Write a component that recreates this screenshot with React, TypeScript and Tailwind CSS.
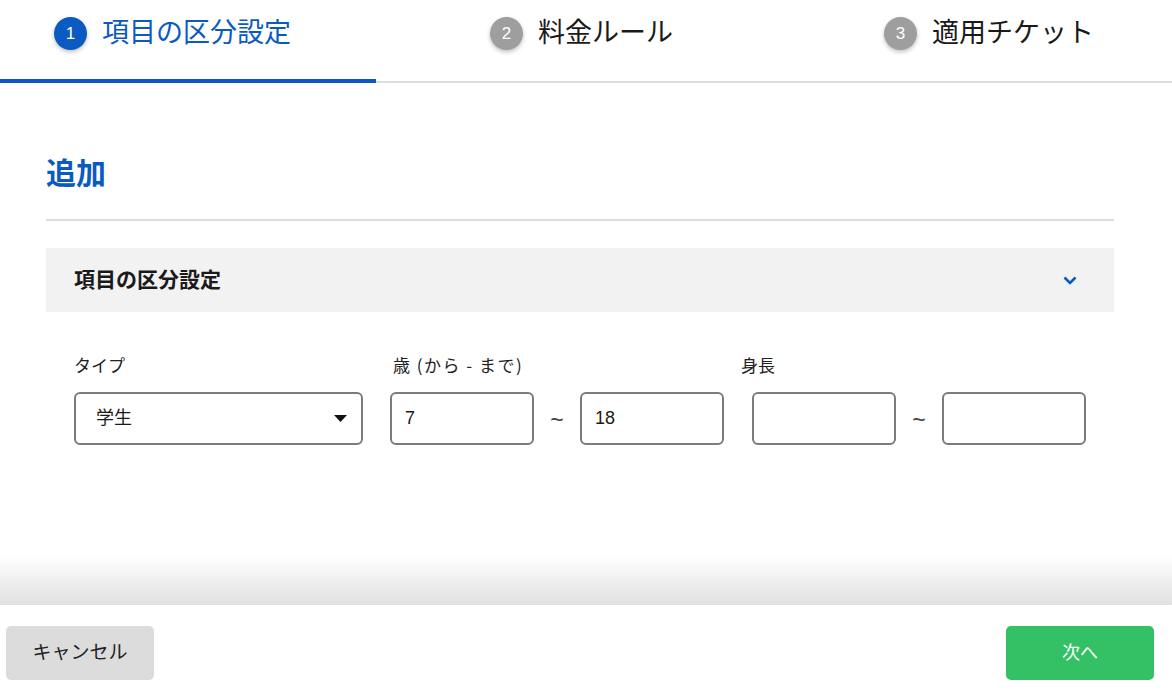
import { useState } from 'react'

const font = 'font-["Liberation_Sans","Noto_Sans_CJK_JP",sans-serif]'
const cjk = 'font-["Noto_Sans_CJK_JP",sans-serif]'

function StepTab({ num, label, active }: { num: number; label: string; active?: boolean }) {
    return (
        <div className="flex h-[67px] items-center gap-[15px]">
            <div
                className={`flex h-[33px] w-[33px] items-center justify-center rounded-full text-[17px] text-white shadow-[0_2px_4px_rgba(0,0,0,0.25)] ${
                    active ? 'bg-[#0a5ac2]' : 'bg-[#9e9e9e]'
                }`}
            >
                {num}
            </div>
            <span className={`text-[27px] leading-none ${active ? 'text-[#0a5ac2]' : 'text-[#1a1a1a]'}`}>
                {label}
            </span>
        </div>
    )
}

function Field({ value }: { value: string }) {
    return (
        <div className="flex h-[53px] w-[144px] items-center rounded-[6px] border-2 border-[#7b7b7b] pl-[13px] text-[18px] text-[#1a1a1a]">
            {value}
        </div>
    )
}

function Tilde() {
    return (
        <div className="flex w-[46px] items-center justify-center pt-[3px] text-[23px] leading-none text-[#444]">
            ~
        </div>
    )
}

export default function App() {
    const [isOpen, setIsOpen] = useState(true)

    return (
        <div className={`flex h-[696px] w-[1172px] flex-col overflow-hidden bg-white ${font}`}>
            {/* steps */}
            <div className="flex h-[83px] border-b-2 border-[#dddddd]">
                <div className="-mb-[2px] h-[83px] w-[376px] border-b-4 border-[#0a5ac2] pl-[54px]">
                    <StepTab num={1} label="項目の区分設定" active />
                </div>
                <div className="w-[394px] pl-[114px]">
                    <StepTab num={2} label="料金ルール" />
                </div>
                <div className="pl-[114px]">
                    <StepTab num={3} label="適用チケット" />
                </div>
            </div>

            <div className="flex-1 pt-[70px] pr-[58px] pl-[46px]">
                <h1 className="text-[30px] leading-[42px] font-bold text-[#0a5ac2]">追加</h1>
                <div className="mt-[24px] h-[2px] bg-[#dcdcdc]" />

                <button
                    onClick={() => setIsOpen(!isOpen)}
                    className="mt-[27px] flex h-[64px] w-full items-center justify-between bg-[#f2f2f2] pr-[37px] pl-[28px]"
                >
                    <span className="text-[21px] font-bold text-[#1a1a1a]">項目の区分設定</span>
                    <svg width="14" height="9" viewBox="0 0 14 9" fill="none">
                        <path
                            d={isOpen ? 'M1.5 1.5L7 7L12.5 1.5' : 'M1.5 7.5L7 2L12.5 7.5'}
                            stroke="#0a5ac2"
                            strokeWidth="2.6"
                        />
                    </svg>
                </button>

                {isOpen && (
                    <div className="flex pt-[41px] pl-[28px]">
                        <div className="w-[289px]">
                            <div className={`text-[17px] leading-[24px] text-[#222] ${cjk}`}>タイプ</div>
                            <div className="mt-[15px] flex h-[53px] items-center justify-between rounded-[6px] border-2 border-[#7b7b7b] pr-[14px] pl-[20px] text-[18px] text-[#1a1a1a]">
                                <span>学生</span>
                                <svg width="13" height="7" viewBox="0 0 13 7">
                                    <path d="M0 0H13L6.5 7Z" fill="#111" />
                                </svg>
                            </div>
                        </div>

                        <div className="ml-[27px]">
                            <div className={`pl-[3px] text-[17px] leading-[24px] tracking-[1.5px] text-[#222] ${cjk}`}>
                                歳 (から - まで)
                            </div>
                            <div className="mt-[15px] flex">
                                <Field value="7" />
                                <Tilde />
                                <Field value="18" />
                            </div>
                        </div>

                        <div className="ml-[28px]">
                            <div className={`-ml-[11px] text-[17px] leading-[24px] text-[#222] ${cjk}`}>身長</div>
                            <div className="mt-[15px] flex">
                                <Field value="" />
                                <Tilde />
                                <Field value="" />
                            </div>
                        </div>
                    </div>
                )}
            </div>

            <div className="h-[50px] bg-linear-to-b from-white to-[#e1e1e1]" />

            <div className="flex h-[91px] items-start justify-between pt-[21px] pr-[18px] pl-[6px]">
                <button className="h-[54px] w-[148px] rounded-[5px] bg-[#dcdcdc] text-[19px] text-[#222]">
                    キャンセル
                </button>
                <button className="h-[54px] w-[148px] rounded-[5px] bg-[#34c065] text-[18px] text-white">
                    次へ
                </button>
            </div>
        </div>
    )
}
